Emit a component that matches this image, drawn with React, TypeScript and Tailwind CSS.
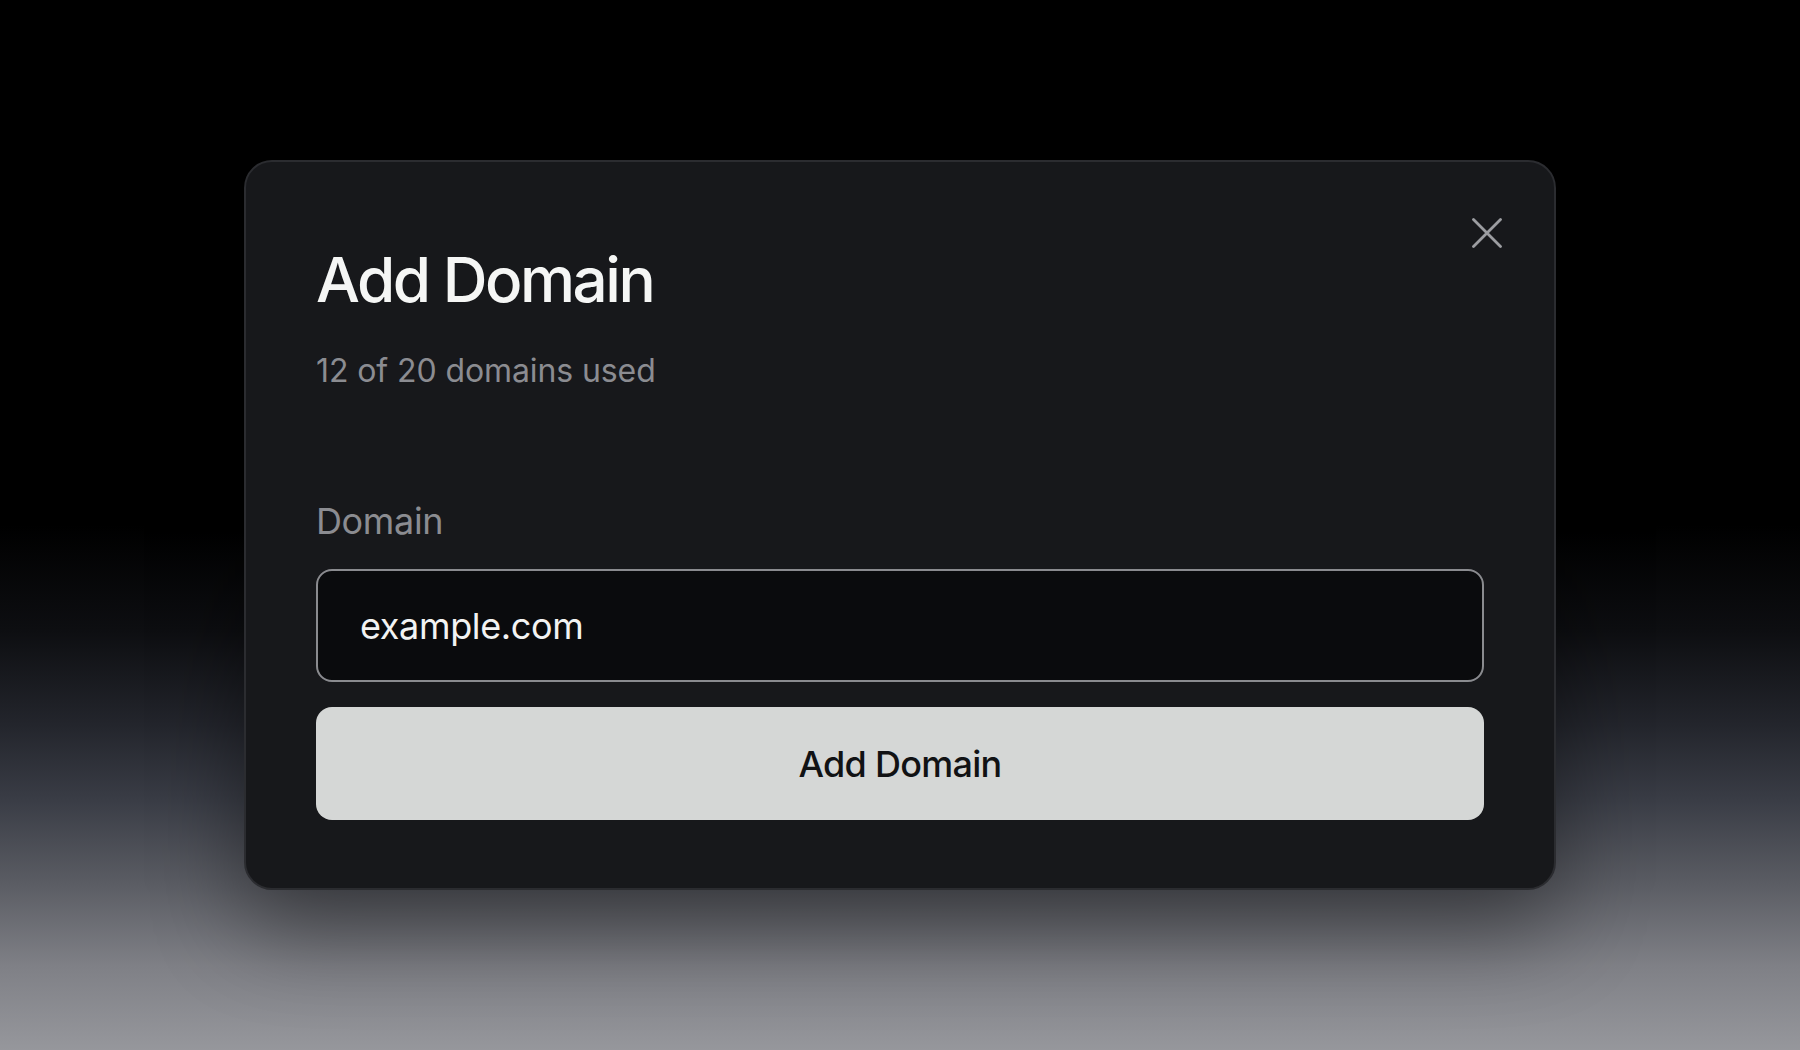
import React, { useState } from 'react';

const CloseIcon: React.FC = () => (
  <svg width="30" height="30" viewBox="0 0 30 30" fill="none">
    <path d="M1.5 1.5L28.5 28.5M28.5 1.5L1.5 28.5" stroke="#9c9da1" strokeWidth="2.8" strokeLinecap="round" />
  </svg>
);

const App: React.FC = () => {
  const [domain, setDomain] = useState('example.com');

  return (
    <div
      className="min-h-screen w-full flex items-center justify-center bg-[linear-gradient(to_bottom,#000_50%,#0d0e11_60%,#23252c_69%,#393c45_76%,#5a5c63_84%,#7f8086_92%,#96979c_100%)]"
      style={{ fontFamily: 'Inter, "Noto Sans", sans-serif' }}
    >
      <div className="relative w-[1312px] bg-[#17181b] border-2 border-[#2b2c30] rounded-[28px] px-[70px] pt-[87px] pb-[68px] shadow-[0_40px_90px_rgba(0,0,0,0.4)] flex flex-col">
        {/* Close */}
        <button className="absolute top-[56px] right-[52px] p-0">
          <CloseIcon />
        </button>

        {/* Header */}
        <h1 className="text-[62px] leading-none font-medium tracking-[-0.04em] text-[#f5f6f5]">Add Domain</h1>
        <p className="mt-[44px] text-[32px] leading-none text-[#8b8c91] tracking-[-0.003em]">12 of 20 domains used</p>

        {/* Form */}
        <label className="mt-[116px] text-[36px] leading-none text-[#8b8c91] tracking-[-0.01em]">Domain</label>
        <input
          value={domain}
          onChange={(e) => setDomain(e.target.value)}
          className="mt-[30px] h-[113px] w-full rounded-[16px] border-[2.5px] border-[#8a8b8f] bg-[#0a0b0d] px-[42px] text-[36px] text-[#f2f3f3] outline-none tracking-[-0.01em]"
        />
        <button className="mt-[25px] h-[113px] w-full rounded-[16px] bg-[#d5d7d6] text-[36px] font-medium text-[#111214] tracking-[-0.02em]">
          Add Domain
        </button>
      </div>
    </div>
  );
};

export default App;
